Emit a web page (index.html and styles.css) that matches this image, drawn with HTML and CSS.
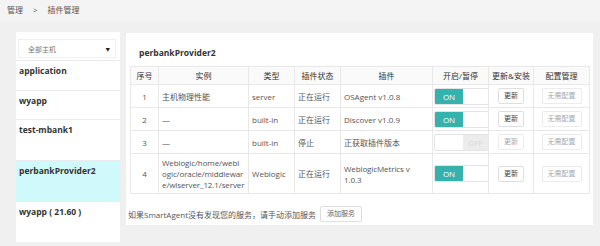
FILE: index.html
```html
<!DOCTYPE html>
<html lang="zh">
<head>
<meta charset="utf-8">
<link rel="stylesheet" href="styles.css">
</head>
<body>
<div class="crumb"><span>管理</span><span class="sep">&gt;</span><span>插件管理</span></div>
<div class="main">
  <aside class="side">
    <div class="select-wrap">
      <div class="select"><span>全部主机</span><span class="caret">▼</span></div>
    </div>
    <ul class="hosts">
      <li class="host h29">application</li>
      <li class="host h28">wyapp</li>
      <li class="host">test-mbank1</li>
      <li class="host active">perbankProvider2</li>
      <li class="host">wyapp ( 21.60 )</li>
    </ul>
  </aside>
  <section class="panel">
    <h2 class="title">perbankProvider2</h2>
    <table class="grid">
      <colgroup>
        <col class="c1"><col class="c2"><col class="c3"><col class="c4"><col class="c5"><col class="c6"><col class="c7"><col class="c8">
      </colgroup>
      <thead>
        <tr><th>序号</th><th>实例</th><th>类型</th><th>插件状态</th><th>插件</th><th>开启/暂停</th><th>更新&amp;安装</th><th>配置管理</th></tr>
      </thead>
      <tbody>
        <tr>
          <td class="num">1</td><td>主机物理性能</td><td>server</td><td>正在运行</td><td>OSAgent v1.0.8</td>
          <td class="sw"><div class="toggle"><span class="on">ON</span><span class="rest"></span></div></td>
          <td class="ctr"><span class="btn">更新</span></td>
          <td class="ctr"><span class="btn dis">无需配置</span></td>
        </tr>
        <tr>
          <td class="num">2</td><td>—</td><td>built-in</td><td>正在运行</td><td>Discover v1.0.9</td>
          <td class="sw"><div class="toggle"><span class="on">ON</span><span class="rest"></span></div></td>
          <td class="ctr"><span class="btn">更新</span></td>
          <td class="ctr"><span class="btn dis">无需配置</span></td>
        </tr>
        <tr>
          <td class="num">3</td><td>—</td><td>built-in</td><td>停止</td><td>正获取插件版本</td>
          <td class="sw"><div class="toggle off"><span class="blank"></span><span class="offpart">OFF</span></div></td>
          <td class="ctr"><span class="btn dis">更新</span></td>
          <td class="ctr"><span class="btn dis">无需配置</span></td>
        </tr>
        <tr class="tall">
          <td class="num">4</td><td class="wrap">Weblogic/home/webl<br>ogic/oracle/middlewar<br>e/wlserver_12.1/server</td><td>Weblogic</td><td>正在运行</td><td class="wrap">WeblogicMetrics v<br>1.0.3</td>
          <td class="sw"><div class="toggle"><span class="on">ON</span><span class="rest"></span></div></td>
          <td class="ctr"><span class="btn">更新</span></td>
          <td class="ctr"><span class="btn dis">无需配置</span></td>
        </tr>
      </tbody>
    </table>
    <div class="foot"><span>如果SmartAgent没有发现您的服务，请手动添加服务</span><span class="btn add">添加服务</span></div>
  </section>
</div>
</body>
</html>
```

FILE: styles.css
```css
* { box-sizing: border-box; }
html, body { margin: 0; padding: 0; }
body {
  width: 600px;
  height: 246px;
  overflow: hidden;
  background: #f0f0f0;
  font-family: "Open Sans", "Noto Sans CJK SC", sans-serif;
  color: #555;
}
.crumb {
  height: 22px;
  line-height: 20px;
  padding-left: 7px;
  font-size: 8px;
  color: #555;
  background: #f4f4f4;
  display: flex;
  gap: 10px;
}
.main {
  display: flex;
  align-items: flex-start;
  padding: 10px 0 0 16px;
  gap: 6px;
}
.side {
  width: 104px;
  background: #fff;
}
.select-wrap {
  padding: 7px 4px 2px 2px;
}
.select {
  height: 19px;
  border: 1px solid #f0f0f0;
  display: flex;
  align-items: center;
  justify-content: space-between;
  padding: 0 5px 0 9px;
  font-size: 7px;
  color: #777;
}
.caret { font-size: 4.5px; color: #222; }
.hosts { list-style: none; margin: 0; padding: 0; }
.host {
  height: 41px;
  border-top: 1px solid #ebebeb;
  padding: 3px 0 0 3px;
  font-size: 8.5px;
  line-height: 13px;
  font-weight: 700;
  color: #333;
}
.host.h29 { height: 30px; }
.host.h28 { height: 29px; }
.host.active { background: #cff9fb; }
.panel {
  width: 467px;
  margin-top: 1px;
  background: #fff;
  padding: 0 3px 2px 2px;
}
.title {
  margin: 0 0 7px;
  padding: 14px 0 0 11px;
  font-size: 8.5px;
  line-height: 12px;
  font-weight: 700;
  color: #333;
}
.grid {
  margin-left: 2px;
  width: 459px;
  border-collapse: collapse;
  table-layout: fixed;
  font-size: 8px;
}
.c1 { width: 28px; } .c2 { width: 90px; } .c3 { width: 46px; } .c4 { width: 46px; }
.c5 { width: 92px; } .c6 { width: 56px; } .c7 { width: 45px; } .c8 { width: 56px; }
.grid th, .grid td {
  border: 1px solid #e8e8e8;
  padding: 0 3px;
  white-space: nowrap;
  overflow: hidden;
}
.grid th {
  height: 18px;
  font-weight: 400;
  color: #333;
  text-align: center;
  background: #fafafa;
  font-size: 8px;
}
.grid td { height: 23px; color: #555; text-align: left; }
.grid td.wrap { padding: 0 2px 0 3px; letter-spacing: -0.1px; }
.grid tr.tall td { height: 40px; line-height: 11px; }
.grid td.num { text-align: center; }
.grid td.ctr { text-align: center; padding: 0; }
.grid td.sw { padding: 0 0 0 1px; overflow: visible; }
.toggle {
  display: flex;
  width: 55px;
  height: 17px;
  border: 1px solid #e3e3e3;
  border-radius: 2px;
  overflow: hidden;
  background: #fff;
}
.toggle .on {
  width: 28px;
  background: #35b2ad;
  color: #fff;
  font-size: 8px;
  line-height: 15px;
  text-align: center;
}
.toggle .blank { width: 28px; }
.toggle .offpart {
  flex: 1;
  background: #ececec;
  color: #d8d8d8;
  font-size: 8px;
  line-height: 15px;
  text-align: center;
}
.btn {
  display: inline-block;
  height: 16px;
  line-height: 14px;
  padding: 0 5px;
  border: 1px solid #dedede;
  border-radius: 2px;
  background: #fff;
  font-size: 7px;
  color: #444;
}
.btn.dis { color: #aaa; border-color: #ececec; }
.foot {
  margin-top: 11px;
  height: 18px;
  display: flex;
  align-items: center;
  gap: 4px;
  font-size: 8px;
  color: #555;
}
.btn.add { height: 16px; padding: 0 6px; color: #666; }
```
